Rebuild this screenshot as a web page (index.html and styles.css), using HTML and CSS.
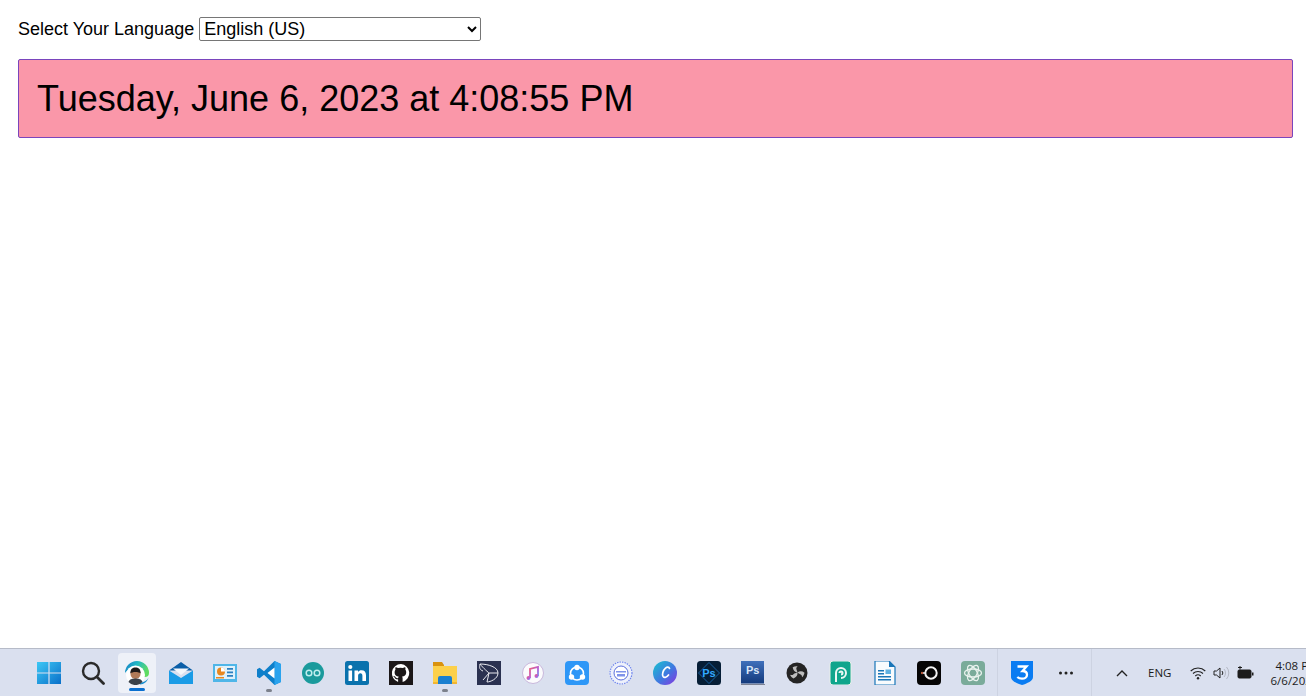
FILE: index.html
```html
<!DOCTYPE html>
<html lang="en">
<head>
<meta charset="utf-8">
<title>Language date</title>
<link rel="stylesheet" href="styles.css">
</head>
<body>
<main class="page">
  <div class="lang-row">
    <label class="lang-label" for="lang">Select Your Language</label>
    <select class="lang-select" id="lang"><option>English (US)</option></select>
  </div>
  <div class="date-box">Tuesday, June 6, 2023 at 4:08:55 PM</div>
</main>
<footer class="taskbar">
  <div class="apps">
    <div class="slot">
      <svg class="ico" viewBox="0 0 24 24"><defs><linearGradient id="w" x1="0" y1="0" x2="1" y2="1"><stop offset="0" stop-color="#3cc8f5"/><stop offset="1" stop-color="#0a6fc9"/></linearGradient></defs><path fill="url(#w)" d="M0 1h11.400v10.400H0zM12.600 1H24v10.400H12.600zM0 12.600h11.400V23H0zM12.600 12.600H24V23H12.600z"/></svg>
    </div>
    <div class="slot">
      <svg class="ico" viewBox="0 0 24 24"><circle cx="10" cy="10" r="8" fill="none" stroke="#2a2a2a" stroke-width="2.400"/><path d="M16 16l6.500 6.500" stroke="#2a2a2a" stroke-width="2.800" stroke-linecap="round"/></svg>
    </div>
    <div class="slot slot-active">
      <svg class="ico" viewBox="0 0 24 24"><defs><linearGradient id="e" x1="0" y1="0" x2="1" y2=".4"><stop offset="0" stop-color="#1777c8"/><stop offset=".5" stop-color="#22b9c4"/><stop offset="1" stop-color="#5fdc62"/></linearGradient></defs><path d="M0 12a12 12 0 0 1 24 0c0 3-2 4-4 4h-5V9H5c-2 0-4 1-5 3z" fill="url(#e)"/><path d="M15 21.500c3.500 0 7-1.500 8.500-5-1 4-4.500 7-8.500 7z" fill="#1a8fd0"/><circle cx="10.500" cy="14" r="9.500" fill="#fff"/><circle cx="10.500" cy="13" r="5" fill="#b07a58"/><path d="M5.300 12.500c0-4.500 2.300-6 5.200-6s5.200 1.500 5.200 6c-2-2-8.400-2-10.400 0z" fill="#1d1a1a"/><path d="M3.500 21c1-3 3.800-3.500 7-3.500s6 .5 7 3.500a9.500 9.500 0 0 1-14 0z" fill="#3a4048"/></svg>
      <i class="mark mark-active"></i>
    </div>
    <div class="slot">
      <svg class="ico" viewBox="0 0 24 24"><path d="M0 9.500L12 1l12 8.500z" fill="#0b5fa8"/><path d="M4 7.500h16L12 14z" fill="#f4f7fb"/><path d="M0 9.500l12 7.500 12-7.500V23H0z" fill="#1a9be6"/></svg>
    </div>
    <div class="slot">
      <svg class="ico" viewBox="0 0 24 24"><path d="M0 3h24v18H0z" fill="#4fb6e8"/><path d="M2 5h20v13H2z" fill="#dff1fa"/><circle cx="8" cy="10.500" r="4" fill="#e8871e"/><path d="M8 10.500v-4a4 4 0 0 1 4 4z" fill="#fff"/><path d="M14 7h6v1.700h-6zM14 10.500h6v1.700h-6zM14 14h6v1.700h-6z" fill="#2b7fc0"/><path d="M3 16h8v1.500H3z" fill="#e8871e"/></svg>
    </div>
    <div class="slot">
      <svg class="ico" viewBox="0 0 24 24"><path d="M17.500 0L24 3v18l-6.500 3L7 13.800 2.600 17.200 0 15.800V8.200l2.600-1.400L7 10.200z" fill="#0e7fca"/><path d="M17.500 0L24 3v18l-6.500 3z" fill="#2aa3ee"/><path d="M17.500 6.500L10.500 12l7 5.500z" fill="#fff"/></svg>
      <i class="mark"></i>
    </div>
    <div class="slot">
      <svg class="ico" viewBox="0 0 24 24"><circle cx="12" cy="12" r="11" fill="#1a9a9c"/><circle cx="8" cy="12" r="2.800" fill="none" stroke="#bfeeee" stroke-width="1.500"/><circle cx="16" cy="12" r="2.800" fill="none" stroke="#bfeeee" stroke-width="1.500"/></svg>
    </div>
    <div class="slot">
      <svg class="ico" viewBox="0 0 24 24"><rect width="24" height="24" rx="2.500" fill="#0a72ad"/><path d="M3.500 9.500h3.600V20H3.500z" fill="#fff"/><circle cx="5.300" cy="6" r="2.100" fill="#fff"/><path d="M9.500 9.500H13V11c.8-1.200 2-1.800 3.500-1.800 3 0 4.500 1.900 4.500 5V20h-3.600v-5.300c0-1.500-.6-2.500-2-2.500s-2.300 1-2.300 2.500V20H9.500z" fill="#fff"/></svg>
    </div>
    <div class="slot">
      <svg class="ico" viewBox="0 0 24 24"><rect width="24" height="24" fill="#1b1718"/><path d="M12 3a9.200 9.200 0 0 0-2.900 17.900v-2.600c-2.600.6-3.200-1.200-3.200-1.200-.5-1.100-1.100-1.400-1.100-1.400-.9-.6.100-.6.100-.6 1 .1 1.500 1 1.500 1 .9 1.500 2.300 1.100 2.800.8.100-.6.300-1.100.6-1.300-2.100-.2-4.200-1-4.200-4.500 0-1 .4-1.800.9-2.500-.1-.2-.4-1.200.1-2.400 0 0 .8-.3 2.500.9a8.700 8.700 0 0 1 4.600 0c1.700-1.200 2.500-.9 2.500-.9.500 1.200.2 2.200.1 2.400.6.700.9 1.500.9 2.500 0 3.500-2.100 4.300-4.200 4.500.3.300.6.800.6 1.700v3.700A9.200 9.200 0 0 0 12 3z" fill="#fff"/></svg>
    </div>
    <div class="slot">
      <svg class="ico" viewBox="0 0 24 24"><path d="M0 1h9l2 3v3H0z" fill="#d9920f"/><path d="M0 5h24v18H0z" fill="#fcd04a"/><path d="M5 17a2 2 0 0 1 2-2h10a2 2 0 0 1 2 2v6H5z" fill="#1a7fd0"/><path d="M0 21h5v2H0zM19 21h5v2h-5z" fill="#f2b632"/></svg>
      <i class="mark"></i>
    </div>
    <div class="slot">
      <svg class="ico" viewBox="0 0 24 24"><rect width="24" height="24" fill="#2a3150"/><g fill="none" stroke="#e8e9ef" stroke-width="1"><path d="M3 3c8 0 18 3 18 9s-8 9-11 9"/><path d="M3 3c3 4 9 9 9 9L6 19"/><path d="M12 12h9M12 12l-2 9M3 3c-1 4 0 6 3 7"/></g></svg>
    </div>
    <div class="slot">
      <svg class="ico" viewBox="0 0 24 24"><defs><linearGradient id="m" x1="0" y1="0" x2="1" y2="1"><stop offset="0" stop-color="#ee5f7a"/><stop offset=".6" stop-color="#b45fd9"/><stop offset="1" stop-color="#5fa8ee"/></linearGradient></defs><circle cx="12" cy="12" r="10.500" fill="#fbfbfd" stroke="#c9b8dc" stroke-width="1"/><path d="M9 17V8l8-2v9" fill="none" stroke="url(#m)" stroke-width="1.800"/><circle cx="7.500" cy="17" r="2" fill="url(#m)"/><circle cx="15.500" cy="15" r="2" fill="url(#m)"/></svg>
    </div>
    <div class="slot">
      <svg class="ico" viewBox="0 0 24 24"><rect width="24" height="24" rx="4" fill="#2e97f7"/><circle cx="12" cy="12.500" r="6.500" fill="none" stroke="#fff" stroke-width="1.600"/><circle cx="12" cy="6.500" r="2.700" fill="#fff"/><circle cx="6.500" cy="16" r="2.700" fill="#fff"/><circle cx="17.500" cy="16" r="2.700" fill="#fff"/></svg>
    </div>
    <div class="slot">
      <svg class="ico" viewBox="0 0 24 24"><circle cx="12" cy="12" r="11.500" fill="#eef1fb"/><circle cx="12" cy="12" r="11" fill="none" stroke="#6f86ec" stroke-width="1.200" stroke-dasharray="1.500 1"/><circle cx="12" cy="12" r="7" fill="#fff" stroke="#5a6fdc" stroke-width="1"/><path d="M7 10h10v1.500H7zM8 13h8v2.500H8z" fill="#7f93ea"/></svg>
    </div>
    <div class="slot">
      <svg class="ico" viewBox="0 0 24 24"><defs><linearGradient id="c" x1="0" y1="0" x2="1" y2="1"><stop offset="0" stop-color="#18c4d0"/><stop offset=".55" stop-color="#3f78e0"/><stop offset="1" stop-color="#8a35e0"/></linearGradient></defs><circle cx="12" cy="12" r="12" fill="url(#c)"/><path d="M16.500 7.500c-.5-1.800-2.400-1.800-4-.4-2.500 2.200-3.800 6.500-2.400 8.500 1.300 1.700 3.800.6 5.400-1.600" fill="none" stroke="#fff" stroke-width="1.700" stroke-linecap="round"/></svg>
    </div>
    <div class="slot">
      <svg class="ico" viewBox="0 0 24 24"><rect width="24" height="24" rx="3.500" fill="#061e36"/><path d="M12 1.500L22.500 12 12 22.500 1.500 12z" fill="none" stroke="#1d6fb8" stroke-width=".8"/><text class="ps-bright" x="12" y="16">Ps</text></svg>
    </div>
    <div class="slot">
      <svg class="ico" viewBox="0 0 24 24"><defs><linearGradient id="p" x1="0" y1="0" x2="0" y2="1"><stop offset="0" stop-color="#3f70bb"/><stop offset="1" stop-color="#143a7c"/></linearGradient></defs><rect y="23" width="24" height="1" fill="#7d8394"/><rect width="23" height="22.500" fill="url(#p)"/><text class="ps-pale" x="5" y="12.500">Ps</text></svg>
    </div>
    <div class="slot">
      <svg class="ico" viewBox="0 0 24 24"><circle cx="12" cy="12" r="10.500" fill="#242424"/><g fill="#bdbdbd"><path d="M12.500 11.500c-2.500-.3-4.500-2-4.800-5.200 1.500-1 3.500-1.400 5-1-1.200.8-1.700 2-1.200 3.200.3.900.8 1.800 1 3z"/><path d="M12.500 11.500c2-1.500 4.600-1.700 7 .2-.3 1.800-1.200 3.500-2.500 4.600.1-1.500-.6-2.600-1.800-3-1-.4-1.800-1.100-2.700-1.800z"/><path d="M12.500 11.500c.3 2.500-1 4.700-4 6-1.500-.8-2.800-2.200-3.400-3.800 1.300.7 2.600.5 3.400-.5.800-.9 2.600-1.300 4-1.700z"/></g></svg>
    </div>
    <div class="slot">
      <svg class="ico" viewBox="0 0 24 24"><rect x="1" width="21" height="24" rx="3" fill="#0fa58c" stroke="#e9efe9" stroke-width="1"/><path d="M7 21v-9a5 5 0 1 1 5 5M10.500 12a1.500 1.500 0 1 1 1.500 1.500" fill="none" stroke="#eaf7f4" stroke-width="2"/></svg>
    </div>
    <div class="slot">
      <svg class="ico" viewBox="0 0 24 24"><path d="M2 0h14l6 6v18H2z" fill="#f8fbfd" stroke="#1a76b8" stroke-width="1.200"/><path d="M16 0l6 6h-6z" fill="#1a76b8"/><path d="M5 9h6v1.500H5zM5 12h6v1.500H5zM5 15h13v1.500H5zM5 18h13v1.500H5z" fill="#1a76b8"/><path d="M12.500 8.500H18V13h-5.500z" fill="#5fb0e0"/></svg>
    </div>
    <div class="slot">
      <svg class="ico" viewBox="0 0 24 24"><rect width="24" height="24" rx="4" fill="#050505"/><circle cx="14" cy="12" r="5.700" fill="none" stroke="#f2f2f2" stroke-width="2"/><circle cx="5" cy="12" r="1.200" fill="#b95a3c"/><path d="M6 12h2.500" stroke="#eee" stroke-width="1.500"/></svg>
    </div>
    <div class="slot">
      <svg class="ico" viewBox="0 0 24 24"><rect width="24" height="24" rx="4" fill="#7aab9a"/><g fill="none" stroke="#e9f2ee" stroke-width="1.300"><ellipse cx="12" cy="12" rx="8.500" ry="4"/><ellipse cx="12" cy="12" rx="8.500" ry="4" transform="rotate(60 12 12)"/><ellipse cx="12" cy="12" rx="8.500" ry="4" transform="rotate(120 12 12)"/></g></svg>
    </div>
    <div class="sep"></div>
    <div class="slot">
      <svg class="ico" viewBox="0 0 24 24"><path d="M1 0h22v16c0 4-6 6.500-11 8C7 22.500 1 20 1 16z" fill="#0a7cf2"/><path d="M7.500 5.500h9l-4 4.500c3 0 4.500 1.500 4.500 3.700 0 2.500-2.200 4-5 4-1.800 0-3.500-.6-4.700-1.700" fill="none" stroke="#fff" stroke-width="2.300"/></svg>
    </div>
    <div class="slot">
      <svg class="dots" viewBox="0 0 16 4"><circle cx="2.500" cy="2" r="1.500"/><circle cx="8" cy="2" r="1.500"/><circle cx="13.500" cy="2" r="1.500"/></svg>
    </div>
  </div>
  <div class="tray">
    <svg class="chev" viewBox="0 0 12 8"><path d="M1 7l5-5 5 5" fill="none" stroke="#222" stroke-width="1.400"/></svg>
    <span class="eng">ENG</span>
    <svg class="wifi" viewBox="0 0 16 14"><g fill="none" stroke="#222" stroke-width="1.100"><path d="M.7 5a10.500 10.500 0 0 1 14.600 0"/><path d="M3 7.500a7.200 7.200 0 0 1 10 0"/><path d="M5.300 10a3.900 3.900 0 0 1 5.400 0"/></g><circle cx="8" cy="12.300" r="1.200" fill="#222"/></svg>
    <svg class="vol" viewBox="0 0 17 14"><path d="M1 5h2.500L7 2v10L3.500 9H1z" fill="none" stroke="#222" stroke-width="1"/><path d="M9 5a3 3 0 0 1 0 4" fill="none" stroke="#222"/><path d="M11 3a6 6 0 0 1 0 8M13.500 1a9 9 0 0 1 0 12" fill="none" stroke="#b4b8c4"/></svg>
    <svg class="batt" viewBox="0 0 17 13"><rect x="1" y="4" width="13" height="8" rx="1.200" fill="#1c1c1c" stroke="#1c1c1c"/><path d="M15 6.500h1.500v3H15z" fill="#1c1c1c"/><path d="M3 0v3.500M1 1.500h4" stroke="#1c1c1c" stroke-width="1"/></svg>
    <div class="clock"><span>4:08 PM</span><span>6/6/2023</span></div>
  </div>
</footer>
</body>
</html>
```
FILE: styles.css
```css
html, body {
  margin: 0;
  height: 100%;
}
body {
  display: flex;
  flex-direction: column;
  height: 696px;
  overflow: hidden;
  background: #fff;
  color: #000;
  font-family: "Liberation Sans", Arial, sans-serif;
}
.page {
  flex: 1;
  padding: 17px 13px 0 18px;
  min-height: 0;
}
.lang-row {
  display: flex;
  align-items: center;
  gap: 5px;
  height: 24px;
}
.lang-label {
  font-size: 18px;
}
.lang-select {
  width: 282px;
  height: 24px;
  padding: 0;
  font-family: inherit;
  font-size: 18px;
  background: #fff;
  border: 1px solid #767676;
  border-radius: 2px;
}
.date-box {
  margin-top: 18px;
  height: 79px;
  box-sizing: border-box;
  display: flex;
  align-items: center;
  padding-left: 18px;
  font-size: 36px;
  background: #fa97a9;
  border: 1px solid #7a45bd;
  border-radius: 2px;
}
.taskbar {
  flex: none;
  height: 48px;
  display: flex;
  background: #dae0ef;
  border-top: 1px solid #b6bbc8;
  box-sizing: border-box;
  padding-left: 27px;
  overflow: hidden;
}
.apps {
  display: flex;
  align-items: center;
  height: 100%;
}
.slot {
  position: relative;
  width: 44px;
  height: 40px;
  display: flex;
  align-items: center;
  justify-content: center;
  flex: none;
  border-radius: 4px;
}
.slot-active {
  width: 38px;
  margin: 0 3px;
  background: #eef1f8;
}
.ico {
  width: 24px;
  height: 24px;
  display: block;
}
.mark {
  position: absolute;
  left: 50%;
  bottom: 1px;
  width: 6px;
  height: 3px;
  margin-left: -3px;
  border-radius: 2px;
  background: #7c818c;
}
.mark-active {
  bottom: 2px;
  width: 16px;
  margin-left: -8px;
  background: #0a6fd0;
}
.ps-bright, .ps-pale {
  font-family: "Liberation Sans", Arial, sans-serif;
  font-weight: 700;
  font-size: 11px;
}
.ps-bright {
  fill: #31a8ff;
  text-anchor: middle;
}
.ps-pale {
  fill: #d9e6f7;
}
.sep {
  width: 1px;
  height: 47px;
  margin: 0 2px;
  flex: none;
  background: #cdd3e2;
}
.dots {
  width: 16px;
  height: 4px;
  fill: #222;
}
.tray {
  margin-left: 3px;
  padding-left: 24px;
  display: flex;
  align-items: center;
  border-left: 1px solid #cdd3e2;
  height: 100%;
  flex: none;
  width: 300px;
  font-family: "Open Sans", "Liberation Sans", sans-serif;
  color: #1b1b1b;
}
.chev {
  width: 12px;
  height: 8px;
  flex: none;
}
.eng {
  margin-left: 20px;
  font-size: 11.500px;
}
.wifi {
  margin-left: 19px;
  width: 16px;
  height: 14px;
  flex: none;
}
.vol {
  margin-left: 7px;
  width: 17px;
  height: 14px;
  flex: none;
}
.batt {
  margin-left: 7px;
  width: 17px;
  height: 13px;
  flex: none;
}
.clock {
  margin-left: 13px;
  display: flex;
  flex-direction: column;
  align-items: flex-end;
  width: 51px;
  font-size: 11.500px;
  line-height: 15px;
  white-space: nowrap;
}
```
